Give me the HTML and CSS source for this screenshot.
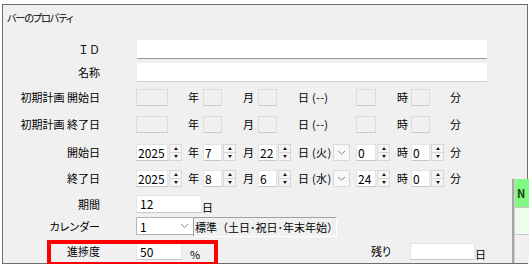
FILE: index.html
```html
<!DOCTYPE html>
<html lang="ja">
<head>
<meta charset="utf-8">
<link rel="stylesheet" href="styles.css">
</head>
<body>
<div class="dlg">
  <div class="title">バーのプロパティ</div>

  <div class="row r1">
    <span class="lbl fw">ＩＤ</span>
    <span class="tb wide focus"></span>
  </div>
  <div class="row r2">
    <span class="lbl">名称</span>
    <span class="tb wide"></span>
  </div>

  <div class="row r3">
    <span class="lbl">初期計画 開始日</span>
    <span class="slot sa"><span class="dis w32"></span></span>
    <span class="unit u15">年</span>
    <span class="slot sb"><span class="dis w19"></span></span>
    <span class="unit u15">月</span>
    <span class="slot sc"><span class="dis w19"></span></span>
    <span class="unit day">日 (--)</span>
    <span class="slot sd"><span class="dis w20"></span></span>
    <span class="unit u14">時</span>
    <span class="slot se"><span class="dis w19"></span></span>
    <span class="unit">分</span>
  </div>
  <div class="row r4">
    <span class="lbl">初期計画 終了日</span>
    <span class="slot sa"><span class="dis w32"></span></span>
    <span class="unit u15">年</span>
    <span class="slot sb"><span class="dis w19"></span></span>
    <span class="unit u15">月</span>
    <span class="slot sc"><span class="dis w19"></span></span>
    <span class="unit day">日 (--)</span>
    <span class="slot sd"><span class="dis w20"></span></span>
    <span class="unit u14">時</span>
    <span class="slot se"><span class="dis w19"></span></span>
    <span class="unit">分</span>
  </div>

  <div class="row r5">
    <span class="lbl">開始日</span>
    <span class="slot sa"><span class="tb w32">2025</span><span class="spin"><i class="up"></i><i class="dn"></i></span></span>
    <span class="unit u15">年</span>
    <span class="slot sb"><span class="tb w19">7</span><span class="spin"><i class="up"></i><i class="dn"></i></span></span>
    <span class="unit u15">月</span>
    <span class="slot sc"><span class="tb w19">22</span><span class="spin"><i class="up"></i><i class="dn"></i></span></span>
    <span class="unit day"><span class="dtxt">日 (火)</span><span class="dd"><svg width="15" height="15" viewBox="0 0 15 15"><polyline points="4,6 7.5,9 11,6" fill="none" stroke="#8c8c8c" stroke-width="1"/></svg></span></span>
    <span class="slot sd"><span class="tb w20">0</span><span class="spin"><i class="up"></i><i class="dn"></i></span></span>
    <span class="unit u14">時</span>
    <span class="slot se"><span class="tb w19">0</span><span class="spin"><i class="up"></i><i class="dn"></i></span></span>
    <span class="unit">分</span>
  </div>
  <div class="row r6">
    <span class="lbl">終了日</span>
    <span class="slot sa"><span class="tb w32">2025</span><span class="spin"><i class="up"></i><i class="dn"></i></span></span>
    <span class="unit u15">年</span>
    <span class="slot sb"><span class="tb w19">8</span><span class="spin"><i class="up"></i><i class="dn"></i></span></span>
    <span class="unit u15">月</span>
    <span class="slot sc"><span class="tb w19">6</span><span class="spin"><i class="up"></i><i class="dn"></i></span></span>
    <span class="unit day"><span class="dtxt">日 (水)</span><span class="dd"><svg width="15" height="15" viewBox="0 0 15 15"><polyline points="4,6 7.5,9 11,6" fill="none" stroke="#8c8c8c" stroke-width="1"/></svg></span></span>
    <span class="slot sd"><span class="tb w20">24</span><span class="spin"><i class="up"></i><i class="dn"></i></span></span>
    <span class="unit u14">時</span>
    <span class="slot se"><span class="tb w19">0</span><span class="spin"><i class="up"></i><i class="dn"></i></span></span>
    <span class="unit">分</span>
  </div>

  <div class="row r7">
    <span class="lbl">期間</span>
    <span class="tb w66 pad3">12</span>
    <span class="unit low">日</span>
  </div>
  <div class="row r8">
    <span class="lbl">カレンダー</span>
    <span class="sel"><span>1</span><svg width="9" height="6" viewBox="0 0 9 6"><polyline points="1,1 4.5,4.5 8,1" fill="none" stroke="#8c8c8c" stroke-width="1"/></svg></span>
    <span class="lblbox">標準（土日･祝日･年末年始）</span>
  </div>
  <div class="row r9">
    <span class="lbl">進捗度</span>
    <span class="tb w46 pad3">50</span>
    <span class="unit low pct">%</span>
    <span class="unit rest">残り</span>
    <span class="tb w65"></span>
    <span class="unit low">日</span>
  </div>

  <div class="side">
    <div class="cell green">N</div>
    <div class="cell lgreen"></div>
    <div class="cell gray"></div>
  </div>
  <div class="hilite"></div>
</div>
</body>
</html>
```

FILE: styles.css
```css
html, body {
  margin: 0;
  background: #ffffff;
}
body {
  font-family: "Noto Sans CJK JP", "Noto Sans", sans-serif;
  font-size: 11px;
  color: #000;
  font-feature-settings: "palt";
}
.dlg {
  position: relative;
  margin: 4px 0 0 2px;
  width: 526px;
  height: 260px;
  box-sizing: border-box;
  border: 1px solid #6c6c6c;
  background: #f0f0f0;
}
.title {
  height: 35px;
  box-sizing: border-box;
  padding: 6px 0 0 4px;
  font-size: 10px;
  line-height: 13px;
  letter-spacing: -1px;
}
.row {
  display: flex;
  align-items: center;
  height: 17px;
}
.r1 { height: 19px; }
.r2 { height: 19px; margin-top: 4px; }
.r3 { margin-top: 7px; }
.r4 { margin-top: 10px; }
.r5 { margin-top: 11px; }
.r6 { margin-top: 9px; }
.r7 { height: 18px; margin-top: 8px; }
.r8 { height: 18px; margin-top: 4px; align-items: flex-start; }
.r9 { margin-top: 8px; }

.lbl {
  flex: none;
  width: 97px;
  margin-right: 36px;
  text-align: right;
  line-height: 15px;
  white-space: nowrap;
}
.lbl.fw { font-feature-settings: normal; }
.r8 .lbl { margin-top: 2px; }

.tb {
  flex: none;
  height: 100%;
  box-sizing: border-box;
  background: #fff;
  border: 1px solid #e4e4e4;
  border-bottom-color: #c6c6c6;
  padding-left: 1px;
  font-size: 12px;
  line-height: 15px;
  white-space: nowrap;
}
.wide {
  width: 350px;
  margin-left: 1px;
  border: none;
  border-bottom: 1px solid #cdcdcd;
}
.wide.focus { border-bottom-color: #9a9a9a; }
.pad3 { padding-left: 3px; }
.dis {
  flex: none;
  height: 100%;
  box-sizing: border-box;
  background: #f0f0f0;
  border: 1px solid #dcdcdc;
  border-bottom-color: #cbcbcb;
}
.w32 { width: 32px; }
.w19 { width: 19px; }
.w20 { width: 20px; }
.w66 { width: 66px; }
.w46 { width: 46px; }
.w65 { width: 65px; }

.slot {
  flex: none;
  display: flex;
  height: 100%;
  align-items: stretch;
}
.sa { width: 52px; }
.sb { width: 40px; }
.sc { width: 40px; }
.sd { width: 41px; }
.se { width: 39px; }

.unit {
  flex: none;
  line-height: 15px;
  white-space: nowrap;
}
.u15 { width: 15px; }
.u14 { width: 14px; }
.day {
  width: 58px;
  display: flex;
  align-items: center;
  height: 100%;
  font-feature-settings: normal;
  letter-spacing: 0.3px;
}
.dtxt { width: 35px; }
.dd {
  width: 17px;
  height: 17px;
  box-sizing: border-box;
  border: 1px solid #dadada;
  background: #f8f8f8;
  display: flex;
  align-items: center;
  justify-content: center;
}
.dd svg { display: block; }

.spin {
  flex: none;
  width: 13px;
  margin-left: 1px;
  box-sizing: border-box;
  border: 1px solid #d6d6d6;
  background: #f4f4f4;
  display: flex;
  flex-direction: column;
}
.spin i {
  flex: 1;
  display: flex;
  align-items: center;
  justify-content: center;
}
.spin i.up { border-bottom: 1px solid #d6d6d6; }
.spin i.up::after {
  content: "";
  border-left: 2.5px solid transparent;
  border-right: 2.5px solid transparent;
  border-bottom: 3px solid #1a1a1a;
}
.spin i.dn::after {
  content: "";
  border-left: 2.5px solid transparent;
  border-right: 2.5px solid transparent;
  border-top: 3px solid #1a1a1a;
}

.low { align-self: flex-end; line-height: 13px; margin-bottom: -1px; }
.pct { margin-left: 8px; width: 20px; }
.rest { margin-left: 161px; width: 39px; align-self: center; }

.sel {
  flex: none;
  width: 57px;
  height: 18px;
  box-sizing: border-box;
  background: #fff;
  border: 1px solid #b4b4b4;
  border-right: none;
  display: flex;
  align-items: center;
  justify-content: space-between;
  padding: 0 4px 0 3px;
  font-size: 12px;
  line-height: 15px;
}
.sel svg { display: block; }
.lblbox {
  flex: none;
  width: 144px;
  height: 20px;
  box-sizing: border-box;
  border-top: 1px solid #a0a0a0;
  border-left: 1px solid #a0a0a0;
  border-right: 1px solid #ffffff;
  border-bottom: 1px solid #ffffff;
  background: #f0f0f0;
  padding-left: 1px;
  line-height: 18px;
  white-space: nowrap;
  font-feature-settings: normal;
}

.side {
  position: absolute;
  left: 509px;
  top: 174px;
  width: 17px;
  height: 84px;
  box-sizing: border-box;
  border-left: 2px solid #a6a6a6;
  display: flex;
  flex-direction: column;
}
.cell {
  box-sizing: border-box;
  border-left: 1px solid #d0d0d0;
}
.green {
  height: 29px;
  background: #80fa80;
  font-size: 11px;
  font-weight: bold;
  line-height: 29px;
  padding-left: 2px;
  color: #1b3a1b;
  border-bottom: 1px solid #c8c8c8;
}
.lgreen {
  height: 27px;
  background: #eefcee;
  border-bottom: 1px solid #c8c8c8;
}
.gray {
  flex: 1;
  background: #f0f0f0;
}
.hilite {
  position: absolute;
  left: 44px;
  top: 235px;
  width: 171px;
  height: 26px;
  box-sizing: border-box;
  border: 4px solid #ff0000;
}
```
